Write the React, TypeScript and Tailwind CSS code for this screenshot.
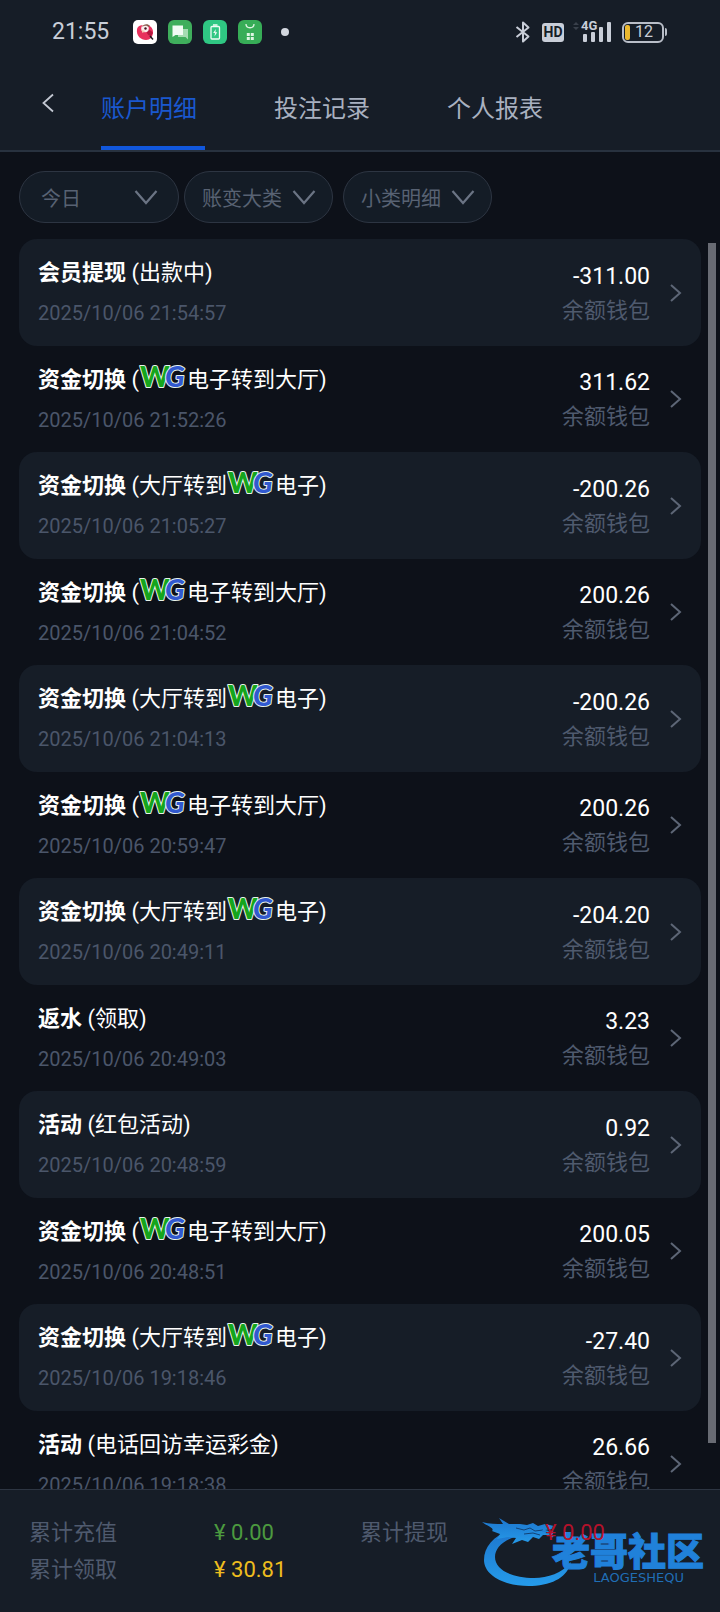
import { Fragment, useState } from 'react'
import clsx from 'clsx'

interface TransactionRecord {
  type: string
  // a "WG" entry in the list is drawn as the provider logo
  detail: string[]
  time: string
  amount: string
}

const TABS = ['账户明细', '投注记录', '个人报表']

const RECORDS: TransactionRecord[] = [
  { type: '会员提现', detail: ['出款中'], time: '2025/10/06 21:54:57', amount: '-311.00' },
  { type: '资金切换', detail: ['', 'WG', '电子转到大厅'], time: '2025/10/06 21:52:26', amount: '311.62' },
  { type: '资金切换', detail: ['大厅转到', 'WG', '电子'], time: '2025/10/06 21:05:27', amount: '-200.26' },
  { type: '资金切换', detail: ['', 'WG', '电子转到大厅'], time: '2025/10/06 21:04:52', amount: '200.26' },
  { type: '资金切换', detail: ['大厅转到', 'WG', '电子'], time: '2025/10/06 21:04:13', amount: '-200.26' },
  { type: '资金切换', detail: ['', 'WG', '电子转到大厅'], time: '2025/10/06 20:59:47', amount: '200.26' },
  { type: '资金切换', detail: ['大厅转到', 'WG', '电子'], time: '2025/10/06 20:49:11', amount: '-204.20' },
  { type: '返水', detail: ['领取'], time: '2025/10/06 20:49:03', amount: '3.23' },
  { type: '活动', detail: ['红包活动'], time: '2025/10/06 20:48:59', amount: '0.92' },
  { type: '资金切换', detail: ['', 'WG', '电子转到大厅'], time: '2025/10/06 20:48:51', amount: '200.05' },
  { type: '资金切换', detail: ['大厅转到', 'WG', '电子'], time: '2025/10/06 19:18:46', amount: '-27.40' },
  { type: '活动', detail: ['电话回访幸运彩金'], time: '2025/10/06 19:18:38', amount: '26.66' },
]

function WgLogo() {
  return (
    <svg width="48" height="28" viewBox="0 0 48 28" className="-mt-2 shrink-0 overflow-visible" aria-label="WG">
      <g
        fontFamily="Lato"
        fontWeight="900"
        stroke="#e8f3ea"
        strokeWidth="2"
        strokeLinejoin="round"
        paintOrder="stroke"
      >
        <text x="1" y="25" fontSize="28" fill="#15a51c">W</text>
        <text x="26" y="25" fontSize="29" fontStyle="italic" fill="#3159cf">G</text>
      </g>
    </svg>
  )
}

function StatusBar() {
  return (
    <div className="flex h-16 items-center justify-between pr-[53px] pl-[52px] text-[#c9ced8]">
      <div className="flex items-center">
        <span className="w-[81px] text-[23px]">21:55</span>
        <div className="flex items-center gap-[11px]">
          <svg width="24" height="24" viewBox="0 0 24 24">
            <rect width="24" height="24" rx="5" fill="#fff" />
            <path d="M4 9c-1 7 4 11 9 11 4 0 7-3 7-8 0-4-3-7-7-7-4 0-8 0-9 4z" fill="#e8305c" />
            <path d="M14 9c3 1 5 2 6 4l-2 3c-3 0-5-3-4-7z" fill="#b3173f" />
            <circle cx="12" cy="8.500" r="3.800" fill="#fbeeee" />
            <path d="M9 7c1-3 6-4 8-1l-2 1c-1-2-4-1-6 0z" fill="#8a5a4c" />
            <circle cx="12.500" cy="8.500" r="1.200" fill="#46151f" />
            <path d="M8.500 10l4 1-3 2z" fill="#f3c9b5" />
            <path d="M17 16l3 3.500" stroke="#1a1a20" strokeWidth="1.500" />
          </svg>
          <svg width="24" height="24" viewBox="0 0 24 24">
            <rect width="24" height="24" rx="6" fill="#3fae5c" />
            <path d="M10 9h10v10.500L17.500 17H10z" fill="#a5dcb2" />
            <path d="M4.500 5.500H15v9.500H7.500l-3 2z" fill="#f2fbf4" />
          </svg>
          <svg width="24" height="24" viewBox="0 0 24 24" fill="none">
            <rect width="24" height="24" rx="6" fill="#2fc783" />
            <rect x="8" y="6.500" width="8.500" height="12.500" rx="1" stroke="#effcf5" strokeWidth="1.300" />
            <path d="M10 5h4.500" stroke="#effcf5" strokeWidth="1.500" />
            <path d="M12.800 9l-2.600 4h1.800l-.5 3.500 2.700-4.300h-1.800z" fill="#effcf5" />
          </svg>
          <svg width="24" height="24" viewBox="0 0 24 24" fill="none">
            <rect width="24" height="24" rx="6" fill="#37ad57" />
            <path d="M8 4c0 5 8 5 8 0" stroke="#ddf5e2" strokeWidth="1.300" />
            <path d="M8.800 13h3v3h-3zM12.800 13h3v3h-3zM8.800 17h3v3h-3zM12.800 17h3v3h-3z" fill="#ddf5e2" />
          </svg>
        </div>
        <span className="ml-[19px] size-2 rounded-full bg-[#d3d7df]" />
      </div>

      <div className="flex items-center">
        <svg width="16" height="24" viewBox="0 0 16 24" fill="none" stroke="currentColor" strokeWidth="2" strokeLinejoin="round">
          <path d="M1.500 7l12 9.500L8 21.500v-19l5.500 5L1.500 17" />
        </svg>
        <span className="ml-[11px] flex h-[19px] w-[22px] items-center justify-center rounded-[3px] bg-[#c9ced8] text-sm font-bold text-[#161d27]">
          HD
        </span>
        <svg width="42" height="24" viewBox="0 0 42 24" className="ml-2 overflow-visible">
          <path d="M1 5l3-3 3 3zM1 7l3 3 3-3z" fill="#39404b" />
          <g fill="currentColor">
            <rect x="11" y="14" width="4" height="8" rx="1" />
            <rect x="19" y="12" width="4" height="10" rx="1" />
            <rect x="27" y="7" width="4" height="15" rx="1" />
            <rect x="35" y="2" width="4" height="20" rx="1" />
          </g>
          <text
            x="9"
            y="10"
            fontSize="13"
            fontWeight="bold"
            fill="currentColor"
            stroke="#161d27"
            strokeWidth="2"
            paintOrder="stroke"
          >
            4G
          </text>
        </svg>
        <div className="ml-2 flex h-[21px] w-[42px] items-center rounded-md border-2 border-[#b9bec8] pl-px text-base leading-none">
          <span className="h-[15px] w-[5px] rounded-xs bg-[#ecb92f]" />
          <span className="ml-[5px]">12</span>
        </div>
        <span className="ml-px h-2 w-[2px] rounded-r bg-[#b9bec8]" />
      </div>
    </div>
  )
}

function FilterSelect({ label, className }: { label: string; className: string }) {
  return (
    <div className={clsx('relative h-[52px]', className)}>
      <select
        aria-label={label}
        className="h-full w-full appearance-none rounded-full border border-[#2d3542] bg-[#141c26] pt-1 text-xl text-[#586273] outline-none"
      >
        <option>{label}</option>
      </select>
      <svg
        viewBox="0 0 24 16"
        fill="none"
        className="pointer-events-none absolute top-[18px] right-[17px] h-4 w-6"
      >
        <path d="M1.500 2L12 14 22.500 2" stroke="#6b7484" strokeWidth="2.200" />
      </svg>
    </div>
  )
}

function RecordRow({ record, shaded }: { record: TransactionRecord; shaded: boolean }) {
  return (
    <li>
      <button
        className={clsx(
          'flex w-full items-center rounded-[18px] px-[19px] text-left',
          shaded ? 'h-[107px] bg-[#161d27]' : 'h-[106px]'
        )}
      >
        <div className="flex flex-1 flex-col gap-2 pt-px">
          <div className="flex h-8 items-center text-[22px] leading-8 whitespace-pre text-white">
            <b>{record.type}</b>
            <span>{' ('}</span>
            {record.detail.map((part, i) => (
              <Fragment key={i}>{part === 'WG' ? <WgLogo /> : <span>{part}</span>}</Fragment>
            ))}
            <span>)</span>
          </div>
          <time className="text-xl leading-8 text-[#4b566a]">{record.time}</time>
        </div>
        <div className="flex flex-col pt-1 text-right">
          <span className="text-[23px] leading-8 text-white">{record.amount}</span>
          <span className="text-[22px] leading-9 text-[#4f5a6e]">余额钱包</span>
        </div>
        <svg width="12" height="20" viewBox="0 0 12 20" fill="none" className="ml-5">
          <path d="M1 2l9 8-9 8" stroke="#5d6676" strokeWidth="2" />
        </svg>
      </button>
    </li>
  )
}

function TotalItem({ label, value, color }: { label: string; value: string; color: string }) {
  return (
    <div className="flex">
      <dt className="w-[185px] text-[#4f5a6e]">{label}</dt>
      <dd className={clsx('relative z-10', color)}>{value}</dd>
    </div>
  )
}

function CommunityMark() {
  return (
    <div className="pointer-events-none absolute right-4 bottom-6 h-[72px] w-[222px] opacity-90">
      <svg viewBox="0 0 222 72" className="absolute inset-0 h-full w-full" fill="none">
        <defs>
          <linearGradient id="dragon" x1="0" y1="0" x2="0" y2="1">
            <stop offset="0" stopColor="#1f7fe0" />
            <stop offset="1" stopColor="#27a9ff" />
          </linearGradient>
        </defs>
        {/* tail and body sweep */}
        <path
          d="M36 12C14 17 2 29 2 44c0 16 22 27 48 26 22-1 36-10 39-24-9 11-23 16-37 16-22 0-39-8-39-21 0-10 10-19 28-22z"
          fill="url(#dragon)"
        />
        {/* horns, head and whiskers */}
        <path
          d="M0 6c8 2 14 2 21 2l-4-6 10 6 11 0 7 1 6-2 5 3 7-2 9 2-1 3-8 1 9 2-2 3-9 0-4 4-6-2-5 5-6-2-10 4 4-6-8-1-11 2 3-5-8-3C13 12 5 10 0 6z"
          fill="url(#dragon)"
        />
        <path d="M34 12l8 2 6-2 5 3 8-1M42 18l9-1 7 2" stroke="#12467e" strokeWidth="1" />
        <path d="M60 15c5 0 8 3 11 6" stroke="#2287e6" strokeWidth="1.500" />
      </svg>
      <div className="absolute top-4 right-0 text-[38px] leading-10 font-black text-[#228cee] [-webkit-text-stroke:1px_#228cee]">
        老哥社区
      </div>
      <div className="absolute right-5 bottom-1 font-['DejaVu_Sans'] text-[13px] leading-none text-[#2277c4]">
        LAOGESHEQU
      </div>
    </div>
  )
}

export default function App() {
  const [activeTab, setActiveTab] = useState(TABS[0])

  return (
    <div className="flex h-screen flex-col overflow-hidden bg-[#0d1119] font-[Roboto,'Noto_Sans_CJK_SC',sans-serif]">
      <header className="border-b-2 border-[#28323f] bg-[#161d27]">
        <StatusBar />
        <nav className="flex h-[86px]">
          <button className="w-[101px] pb-2 pl-[42px]" aria-label="返回">
            <svg width="12" height="20" viewBox="0 0 12 20" fill="none">
              <path d="M11 1.500L1.500 10l9.500 8.500" stroke="#c3c8d2" strokeWidth="1.800" />
            </svg>
          </button>
          <div className="flex gap-[69px]">
            {TABS.map((tab) => (
              <button
                key={tab}
                onClick={() => setActiveTab(tab)}
                className={clsx(
                  'w-[104px] border-b-4 pt-2 text-left text-2xl',
                  tab === activeTab ? 'border-[#1157dc] text-[#1a58cf]' : 'border-transparent text-[#a9b1c0]'
                )}
              >
                {tab}
              </button>
            ))}
          </div>
        </nav>
      </header>

      <div className="flex px-[19px] pt-[19px] pb-4">
        <FilterSelect label="今日" className="w-40 [&>select]:pl-[21px] [&>svg]:right-[21px]" />
        <FilterSelect label="账变大类" className="ml-[5px] w-[149px] [&>select]:pl-[17px]" />
        <FilterSelect label="小类明细" className="ml-[10px] w-[149px] [&>select]:pl-[17px]" />
      </div>

      <main className="relative min-h-0 flex-1">
        <ul className="h-full overflow-y-auto px-[19px] [scrollbar-width:none]">
          {RECORDS.map((record, i) => (
            <RecordRow key={record.time} record={record} shaded={i % 2 === 0} />
          ))}
        </ul>
        <div className="absolute top-1 right-1 bottom-[46px] w-2 bg-[#686b73]" />
      </main>

      <footer className="relative border-t border-[#2d3542] bg-[#161d27] px-[29px] py-6">
        <dl className="grid grid-cols-2 text-[22px] leading-[37px]">
          <TotalItem label="累计充值" value="¥ 0.00" color="text-[#4c9a3f]" />
          <TotalItem label="累计提现" value="¥ 0.00" color="text-[#b3122b]" />
          <TotalItem label="累计领取" value="¥ 30.81" color="text-[#eebd1e]" />
        </dl>
        <CommunityMark />
      </footer>
    </div>
  )
}
